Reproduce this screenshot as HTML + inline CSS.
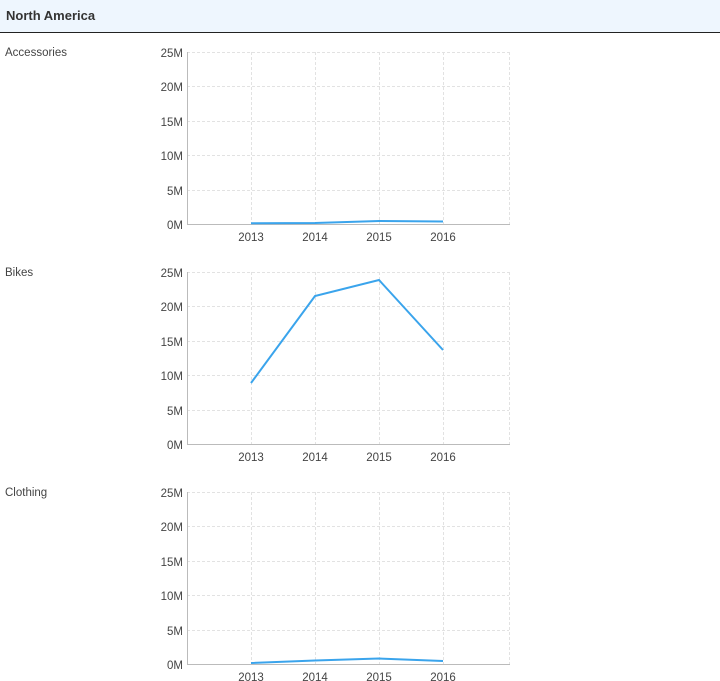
<!DOCTYPE html>
<html><head><meta charset="utf-8"><style>
body{margin:0;width:720px;height:681px;overflow:hidden;background:#fff;font-family:"Liberation Sans",sans-serif}
.h{position:absolute;left:0;top:0;width:720px;height:33px;background:#eef6fe;border-bottom:1px solid #222;box-sizing:border-box}
.h span{position:absolute;left:6px;top:8px;font-size:13px;font-weight:bold;color:#333}
svg{position:absolute;left:0;top:0}
</style></head><body>
<div class="h"><span>North America</span></div>
<svg width="720" height="681" font-family="Liberation Sans, sans-serif" font-size="11.5" fill="#444">
<defs>
<g id="grid">
<g stroke="#e2e2e2" stroke-dasharray="3,2" stroke-width="1">
<line x1="187" y1="52.5" x2="509" y2="52.5"/><line x1="187" y1="86.5" x2="509" y2="86.5"/>
<line x1="187" y1="121.5" x2="509" y2="121.5"/><line x1="187" y1="155.5" x2="509" y2="155.5"/>
<line x1="187" y1="190.5" x2="509" y2="190.5"/>
<line x1="251.5" y1="52" x2="251.5" y2="224"/><line x1="315.5" y1="52" x2="315.5" y2="224"/>
<line x1="379.5" y1="52" x2="379.5" y2="224"/><line x1="443.5" y1="52" x2="443.5" y2="224"/>
<line x1="509.5" y1="52" x2="509.5" y2="224"/>
</g>
<line x1="187.5" y1="52" x2="187.5" y2="224" stroke="#bbb"/>
<line x1="187" y1="224.5" x2="510" y2="224.5" stroke="#bbb"/>
<g text-anchor="end">
<text x="183" y="57">25M</text><text x="183" y="91">20M</text><text x="183" y="126">15M</text>
<text x="183" y="160">10M</text><text x="183" y="195">5M</text><text x="183" y="229">0M</text>
</g>
<g text-anchor="middle">
<text x="251" y="241">2013</text><text x="315" y="241">2014</text><text x="379" y="241">2015</text><text x="443" y="241">2016</text>
</g>
</g>
</defs>
<text x="5" y="56">Accessories</text>
<use href="#grid"/>
<polyline points="251,223.3 315,223 379,221 443,221.5" fill="none" stroke="#3aa4ec" stroke-width="2"/>
<text x="5" y="276">Bikes</text>
<use href="#grid" y="220"/>
<polyline points="251,383 315,296 379,280 443,350" fill="none" stroke="#3aa4ec" stroke-width="2"/>
<text x="5" y="496">Clothing</text>
<use href="#grid" y="440"/>
<polyline points="251,663 315,660.5 379,658.5 443,661" fill="none" stroke="#3aa4ec" stroke-width="2"/>
</svg>
</body></html>
